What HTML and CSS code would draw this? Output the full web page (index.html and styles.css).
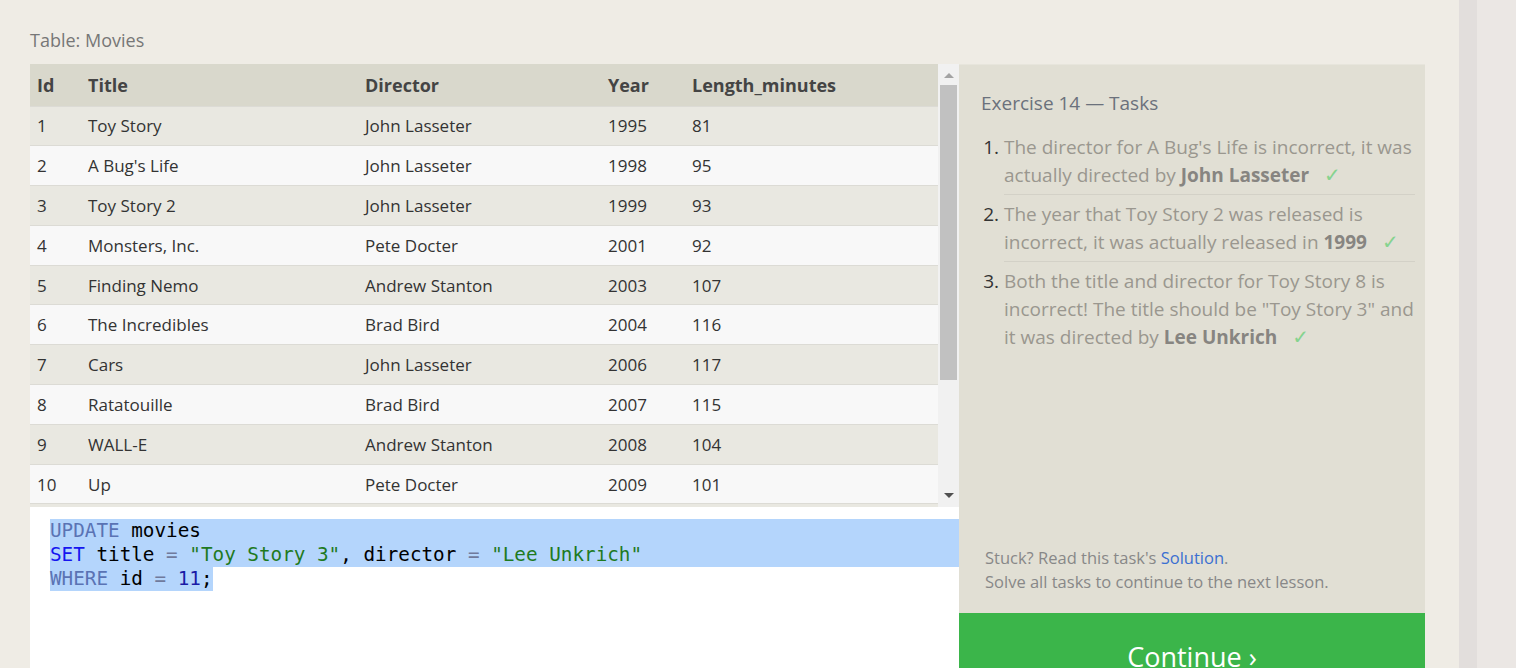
FILE: index.html
```html
<!DOCTYPE html>
<html>
<head>
<meta charset="utf-8">
<title>SQL Lesson 14</title>
<link rel="stylesheet" href="styles.css">
</head>
<body>
<div class="page">
  <div class="main">
    <div class="caption">Table: Movies</div>
    <div class="workspace">
      <div class="left">
        <div class="table-wrap">
          <div class="table-view">
            <table class="movies">
              <thead>
                <tr><th class="c-id">Id</th><th class="c-title">Title</th><th class="c-dir">Director</th><th class="c-year">Year</th><th class="c-len">Length_minutes</th></tr>
              </thead>
              <tbody>
                <tr><td>1</td><td>Toy Story</td><td>John Lasseter</td><td>1995</td><td>81</td></tr>
                <tr><td>2</td><td>A Bug's Life</td><td>John Lasseter</td><td>1998</td><td>95</td></tr>
                <tr><td>3</td><td>Toy Story 2</td><td>John Lasseter</td><td>1999</td><td>93</td></tr>
                <tr><td>4</td><td>Monsters, Inc.</td><td>Pete Docter</td><td>2001</td><td>92</td></tr>
                <tr><td>5</td><td>Finding Nemo</td><td>Andrew Stanton</td><td>2003</td><td>107</td></tr>
                <tr><td>6</td><td>The Incredibles</td><td>Brad Bird</td><td>2004</td><td>116</td></tr>
                <tr><td>7</td><td>Cars</td><td>John Lasseter</td><td>2006</td><td>117</td></tr>
                <tr><td>8</td><td>Ratatouille</td><td>Brad Bird</td><td>2007</td><td>115</td></tr>
                <tr><td>9</td><td>WALL-E</td><td>Andrew Stanton</td><td>2008</td><td>104</td></tr>
                <tr><td>10</td><td>Up</td><td>Pete Docter</td><td>2009</td><td>101</td></tr>
                <tr><td>11</td><td>Toy Story 3</td><td>Lee Unkrich</td><td>2010</td><td>103</td></tr>
                <tr><td>12</td><td>Cars 2</td><td>John Lasseter</td><td>2011</td><td>120</td></tr>
                <tr><td>13</td><td>Brave</td><td>Brenda Chapman</td><td>2012</td><td>102</td></tr>
                <tr><td>14</td><td>Monsters University</td><td>Dan Scanlon</td><td>2013</td><td>110</td></tr>
              </tbody>
            </table>
          </div>
          <div class="scrollbar">
            <div class="sb-arrow sb-up"></div>
            <div class="sb-track"><div class="sb-thumb"></div></div>
            <div class="sb-arrow sb-down"></div>
          </div>
        </div>
        <div class="editor">
          <div class="line sel"><span class="kw">UPDATE</span> movies</div>
          <div class="line sel"><span class="kw2">SET</span> title <span class="op">=</span> <span class="str">"Toy Story 3"</span>, director <span class="op">=</span> <span class="str">"Lee Unkrich"</span></div>
          <div class="line"><span class="sel-part"><span class="kw">WHERE</span> id <span class="op">=</span> <span class="num">11</span>;</span></div>
        </div>
      </div>
      <div class="right">
        <div class="tasks">
          <h3 class="tasks-title">Exercise 14 — Tasks</h3>
          <ol class="task-list">
            <li>The director for A Bug's Life is incorrect, it was actually directed by <b>John Lasseter</b> <span class="check">✓</span></li>
            <li>The year that Toy Story 2 was released is incorrect, it was actually released in <b>1999</b> <span class="check">✓</span></li>
            <li>Both the title and director for Toy Story 8 is incorrect! The title should be "Toy Story 3" and it was directed by <b>Lee Unkrich</b> <span class="check">✓</span></li>
          </ol>
          <div class="help">
            <div>Stuck? Read this task's <a class="link" href="#">Solution</a>.</div>
            <div>Solve all tasks to continue to the next lesson.</div>
          </div>
        </div>
        <div class="continue">Continue ›</div>
      </div>
    </div>
  </div>
  <div class="strip"></div>
</div>
</body>
</html>
```

FILE: styles.css
```css
* { box-sizing: border-box; }
html, body { margin: 0; padding: 0; height: 100%; overflow: hidden; }
body { font-family: "Open Sans", "Noto Sans", sans-serif; }

.page { display: flex; height: 668px; overflow: hidden; }
.main { flex: 1; background: #efece5; padding: 27px 34px 0 30px; }
.strip { width: 57px; background: linear-gradient(to right, #e2dedc 0, #e2dedc 18px, #ebe7e4 18px); }

.caption { font-size: 18px; color: #777; line-height: 26px; margin-bottom: 11px; }

.workspace { display: flex; height: 629px; }
.left { width: 929px; display: flex; flex-direction: column; }
.right { width: 466px; display: flex; flex-direction: column; background: #e1dfd4; border-top: 1px solid #e7e5dc; }

.table-wrap { height: 443px; display: flex; flex: none; }
.table-view { flex: 1; overflow: hidden; }
.movies { border-collapse: collapse; width: 100%; table-layout: fixed; }
.movies th { background: #d9d8cc; color: #444; font-weight: 700; font-size: 18px; text-align: left; height: 42px; padding: 0 0 0 7px; }
.movies td { font-size: 17px; color: #333; height: 39.8px; padding: 0 0 0 7px; border-top: 1px solid #dcdbd5; }
.movies tbody tr:nth-child(odd) td { background: #e9e8e1; }
.movies tbody tr:nth-child(even) td { background: #f8f8f8; }
.c-id { width: 51px; }
.c-title { width: 277px; }
.c-dir { width: 243px; }
.c-year { width: 84px; }

.scrollbar { width: 21px; background: #f1f1f1; display: flex; flex-direction: column; align-items: center; }
.sb-arrow { height: 17px; width: 17px; display: flex; align-items: center; justify-content: center; }
.sb-up::before { content: ""; border-left: 5px solid transparent; border-right: 5px solid transparent; border-bottom: 5px solid #a3a3a3; }
.sb-down::before { content: ""; border-left: 5px solid transparent; border-right: 5px solid transparent; border-top: 5px solid #505050; }
.sb-up { margin-top: 3px; }
.sb-down { margin-bottom: 3px; }
.sb-track { flex: 1; width: 17px; padding-top: 1px; }
.sb-thumb { height: 295px; background: #c1c1c1; }

.editor { flex: 1; background: #fff; padding: 12px 0 0 20px; font-family: "DejaVu Sans Mono", "Liberation Mono", monospace; font-size: 19.3px; line-height: 24px; color: #000; }
.line { white-space: pre; height: 24px; }
.line.sel { background: #b4d5fc; }
.sel-part { background: #b4d5fc; display: inline-block; height: 24px; }
.kw { color: #5a73b4; }
.kw2 { color: #1515f0; }
.op { color: #707a9c; }
.str { color: #1f7a1f; }
.num { color: #1a1aa6; }

.tasks { flex: 1; padding: 23px 10px 0 22px; display: flex; flex-direction: column; }
.tasks-title { margin: 0; font-weight: 400; font-size: 19px; line-height: 30px; color: #6b717c; }
.task-list { margin: 15px 0 0 0; padding: 0 0 0 23px; font-size: 19px; line-height: 28px; color: #9a978f; }
.task-list li { padding: 0 0 5px 0; border-bottom: 1px solid #d3d1c7; margin-bottom: 5px; }
.task-list li:last-child { border-bottom: none; }
.task-list li::marker { color: #333; }
.task-list b { color: #878581; }
.check { color: #86d38f; margin-left: 10px; font-family: "DejaVu Sans", sans-serif; font-size: 20px; }
.help { margin-top: auto; margin-left: 4px; padding-bottom: 19px; font-size: 16.5px; line-height: 24px; color: #888; }
.link { color: #3b6fd1; text-decoration: none; }

.continue { height: 80px; flex: none; background: #3bb54a; color: #fff; font-size: 27px; text-align: center; padding-top: 22px; line-height: 44px; }
```
